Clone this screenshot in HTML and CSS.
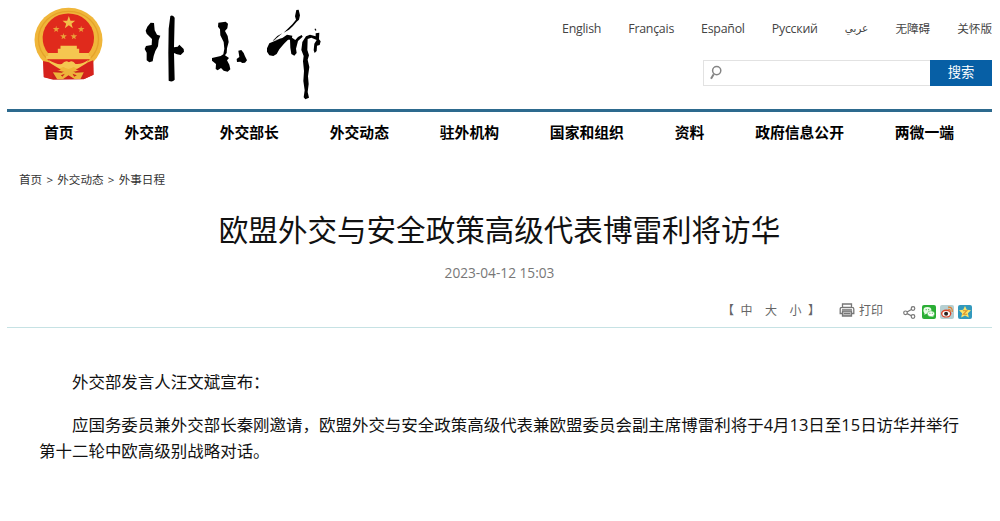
FILE: index.html
```html
<!DOCTYPE html>
<html lang="zh-CN">
<head>
<meta charset="utf-8">
<title>外交部</title>
<link rel="stylesheet" href="styles.css">
</head>
<body>
<div class="page">
  <header class="header">
    <div class="brand">
      <svg class="emblem" viewBox="98 18 212 228" aria-label="国徽">
        <path fill="#c9211d" d="M128 182L130 232L158 239L250 238L279 224L278 176Z"/>
        <ellipse cx="204" cy="120" rx="102" ry="97" fill="#f0b63a"/>
        <ellipse cx="204" cy="118" rx="90" ry="84" fill="none" stroke="#e5a229" stroke-width="4"/>
        <path fill="#e02a1c" d="M143 160A77 74 0 1 1 264 160Z"/>
        <path fill="#f3c04a" d="M205 48l5 14 14 0-11 9 4 14-12-9-12 9 4-14-11-9 14 0z"/>
        <path fill="#e9a23a" d="M167 77l2 7 8 0-6 5 2 7-6-4-6 4 2-7-6-5 8 0z"/>
        <path fill="#e9a23a" d="M242 77l2 7 8 0-6 5 2 7-6-4-6 4 2-7-6-5 8 0zM189 99l2 7 8 0-6 5 2 7-6-4-6 4 2-7-6-5 8 0zM220 99l2 7 8 0-6 5 2 7-6-4-6 4 2-7-6-5 8 0z"/>
        <path fill="#f5c650" d="M180 137H229V146H236V159H265V168H270V178H137V168H143V159H172V146H180Z"/>
        <path fill="#dc261d" d="M140 178H268L254 190Q238 202 221 199Q214 184 204 187Q192 183 185 199Q167 201 154 190Z"/>
        <path fill="#f5c650" d="M144 180Q170 195 184 192Q196 178 205 187Q216 178 225 192Q245 194 263 180L255 195Q234 210 220 202L204 207L188 202Q172 209 152 194Z"/>
        <path fill="#d6221d" d="M128 183L145 187L181 209L157 216L155 237L130 231ZM278 181L263 187L226 209L250 216L252 236L279 224Z"/>
        <path fill="#edb43b" d="M157 217L184 218Q204 200 225 218L250 217L240 237H222L204 226L187 238H170Z"/>
        <path fill="#ce211c" d="M181 226L193 221L186 230ZM216 221L229 226L221 230ZM192 237L204 230L219 237Z"/>
      </svg>
      <svg class="wordmark" viewBox="0 0 600 330" role="img" aria-label="外交部">
        <path d="M62 68L72 69L74 91L81 104L91 107L86 120L84 139L76 153L71 168L68 184L58 187L50 181L50 158L44 147L48 138L65 135L66 117L50 101L47 92L52 80Z"/>
        <path d="M121 48Q128 44 134 53L132 142L143 140L148 134L161 147L162 155L152 165L141 163L132 159L134 239Q127 248 116 242L115 160L116 86Z"/>
        <path d="M265 68L287 65L294 71L292 85L285 93L293 108L296 126L291 145L290 159L285 166L297 174L291 181L298 194L301 208L293 215L281 212L273 204L263 211L257 207L258 192L246 182L246 174L272 168L280 163L283 146L281 126L271 106L270 88L264 80Z"/>
        <path d="M325 152L334 150L341 159L345 169L351 181L345 188L337 189L331 185L321 186L320 177L328 171Z"/>
        <path d="M499 30L506 29L510 46L507 59L500 65L489 78L477 89L461 98L487 73L498 59L495 49Z"/>
        <path d="M457 100L442 108L428 122L450 116L418 130L411 145L411 155L418 166L430 168L440 162L448 148L462 131L474 119L480 119L481 143L484 162L493 167L500 159L498 146L504 123L518 110L515 105L504 111L496 120L486 113L487 107L471 104L457 114L432 121Z"/>
        <path d="M517 126L528 109L540 104L557 109L557 100L568 98L567 118L572 124L569 135L561 137L560 153L554 159L551 151L553 131L560 120L544 113L533 117L532 150L537 166L533 179L538 201L534 229L536 252L533 276L537 293L526 298L521 292L524 271L520 243L522 213L519 184L521 168L514 150Z"/>
        <path d="M555 85l4 4-1 4-4-4z"/>
      </svg>
    </div>
    <div class="tools">
      <nav class="langs">
        <a class="latin">English</a><a class="latin">Français</a><a class="latin">Español</a><a class="latin">Русский</a><a class="arabic" lang="ar">عربي</a><a>无障碍</a><a>关怀版</a>
      </nav>
      <div class="search">
        <div class="search-field">
          <svg viewBox="0 0 14 16" width="14" height="16" fill="none" stroke="#858585"><circle cx="7.7" cy="5.6" r="4.1" stroke-width="1.5"/><path stroke-width="2" d="M4.7 9.3L2 13.8"/></svg>
        </div>
        <div class="search-button">搜索</div>
      </div>
    </div>
  </header>
  <nav class="menu">
    <a>首页</a><a>外交部</a><a>外交部长</a><a>外交动态</a><a>驻外机构</a><a>国家和组织</a><a>资料</a><a>政府信息公开</a><a>两微一端</a>
  </nav>
  <div class="crumbs">首页 &gt; 外交动态 &gt; 外事日程</div>
  <h1 class="title">欧盟外交与安全政策高级代表博雷利将访华</h1>
  <div class="date">2023-04-12 15:03</div>
  <div class="actions">
    <div class="sizes"><span>【</span><span>中</span><span>大</span><span>小</span><span>】</span></div>
    <div class="print">
      <svg viewBox="0 0 16 14" width="16" height="14" fill="none" stroke="#777" stroke-width="1.3"><path d="M3.5 4V1h9v3M3.5 10.5H1.2V6Q1.2 4.3 3 4.3H13Q14.8 4.3 14.8 6V10.5H12.5"/><path fill="#bbb" d="M3.5 8h9v5h-9z"/><path d="M3 6.3h10M5 10.5h6" stroke-width="1"/></svg>
      <span>打印</span>
    </div>
    <div class="share">
      <svg viewBox="0 0 13 13" width="13" height="13" fill="none" stroke="#777" stroke-width="1.2"><circle cx="2.5" cy="6.8" r="1.8"/><circle cx="10" cy="2.5" r="1.8"/><circle cx="10" cy="10.5" r="1.8"/><path d="M4 5.9L8.4 3.4M4.1 7.6L8.3 9.7"/></svg>
      <svg viewBox="0 0 14 14" width="14" height="14"><rect width="14" height="14" rx="2" fill="#2aae35"/><ellipse cx="5.4" cy="5.4" rx="4" ry="3.3" fill="#e9fbe6"/><path fill="#e9fbe6" d="M2.5 7L2.5 10L5 8ZM10.5 10L11.5 12L8.5 11.5Z"/><ellipse cx="9" cy="8.8" rx="3.6" ry="2.9" fill="#fff" stroke="#2aae35" stroke-width=".5"/><path stroke="#2aae35" stroke-width="1" d="M3.7 4.7h1M6.2 4.7h1M7.4 8.2h1M9.8 8.2h1"/></svg>
      <svg viewBox="0 0 14 14" width="14" height="14"><rect width="14" height="14" rx="2" fill="#b5cfd1"/><ellipse cx="6.2" cy="8.6" rx="5.2" ry="4" fill="#d9472d"/><ellipse cx="6.2" cy="8.8" rx="3.8" ry="2.7" fill="#fff"/><circle cx="6.1" cy="8.8" r="2" fill="#292020"/><path d="M8 2.2Q12.8 1.8 12.2 7M8.2 4.3Q10.6 4.2 10.2 6.5" fill="none" stroke="#df7e2d" stroke-width="1.2"/></svg>
      <svg viewBox="0 0 14 14" width="14" height="14"><rect width="14" height="14" rx="2" fill="#3299bd"/><path fill="#fbe56a" d="M7 1L8.8 4.8 13 5.3 9.9 8.2 10.8 12.5 7 10.4 3.2 12.5 4.1 8.2 1 5.3 5.2 4.8Z"/><path d="M4.9 5.7H8.9L5.3 9.2H9.3" fill="none" stroke="#d9902a" stroke-width="1.1"/></svg>
    </div>
  </div>
  <article class="article">
    <p>外交部发言人汪文斌宣布：</p>
    <p>应国务委员兼外交部长秦刚邀请，欧盟外交与安全政策高级代表兼欧盟委员会副主席博雷利将于4月13日至15日访华并举行第十二轮中欧高级别战略对话。</p>
  </article>
</div>
</body>
</html>
```
FILE: styles.css
```css
* { box-sizing: border-box; }
body {
  margin: 0;
  background: #fff;
  color: #111;
  font-family: "Open Sans", "Noto Sans CJK SC", sans-serif;
}
svg { display: block; flex: none; }
.page { width: 985px; margin-left: 7px; }
.header {
  display: flex;
  justify-content: space-between;
  height: 112px;
  border-bottom: 3px solid #2d6a8e;
}
.brand { display: flex; }
.emblem { width: 71px; height: 76px; margin: 6px 0 0 26px; }
.wordmark { width: 200px; height: 110px; margin-left: 26px; }
.tools { width: 430px; padding-top: 18px; }
.langs {
  display: flex;
  justify-content: space-between;
  height: 22px;
  font-size: 11.6px;
  line-height: 21px;
  color: #444;
  white-space: nowrap;
}
.latin { font-size: 12.4px; letter-spacing: -0.25px; }
.arabic { font-family: "DejaVu Sans", sans-serif; font-size: 10.5px; }
.search { display: flex; width: 289px; height: 26px; margin: 20px 0 0 auto; }
.search-field { flex: 1; padding: 4px 5px; border: 1px solid #e2e2e2; border-right: 0; }
.search-button {
  width: 62px;
  background: #075fa5;
  color: #fff;
  font-size: 13.3px;
  line-height: 25px;
  text-align: center;
}
.menu {
  display: flex;
  justify-content: space-between;
  height: 42px;
  padding: 0 38px 0 37px;
  font-size: 14.8px;
  font-weight: 700;
  line-height: 41px;
  color: #000;
  white-space: nowrap;
}
.crumbs {
  padding: 15px 12px 0;
  font-size: 11.6px;
  line-height: 22px;
  word-spacing: 1.2px;
  color: #333;
}
.title {
  margin: 17px 0 0;
  font-size: 29.55px;
  font-weight: 400;
  line-height: 44px;
  text-align: center;
  color: #111;
}
.date { margin-top: 11px; font-size: 13.7px; line-height: 20px; text-align: center; color: #777; }
.actions {
  display: flex;
  align-items: center;
  height: 45px;
  padding: 10px 20px 0 0;
  justify-content: flex-end;
  border-bottom: 1px solid #c6e2e4;
  font-size: 12px;
  color: #666;
}
.sizes { display: flex; gap: 12.5px; margin-right: 19px; }
.sizes span:first-child { margin-right: -6px; }
.sizes span:last-child { margin-left: -6px; }
.print { display: flex; align-items: center; gap: 4px; margin-right: 20px; }
.share { display: flex; align-items: center; gap: 4px; padding-top: 4px; }
.share svg:first-child { margin-right: 2px; }
.article { padding: 41px 0 0 32px; font-size: 16.48px; line-height: 26.5px; color: #111; }
.article p { width: 926px; margin: 0 0 16px; text-indent: 2em; }
```
